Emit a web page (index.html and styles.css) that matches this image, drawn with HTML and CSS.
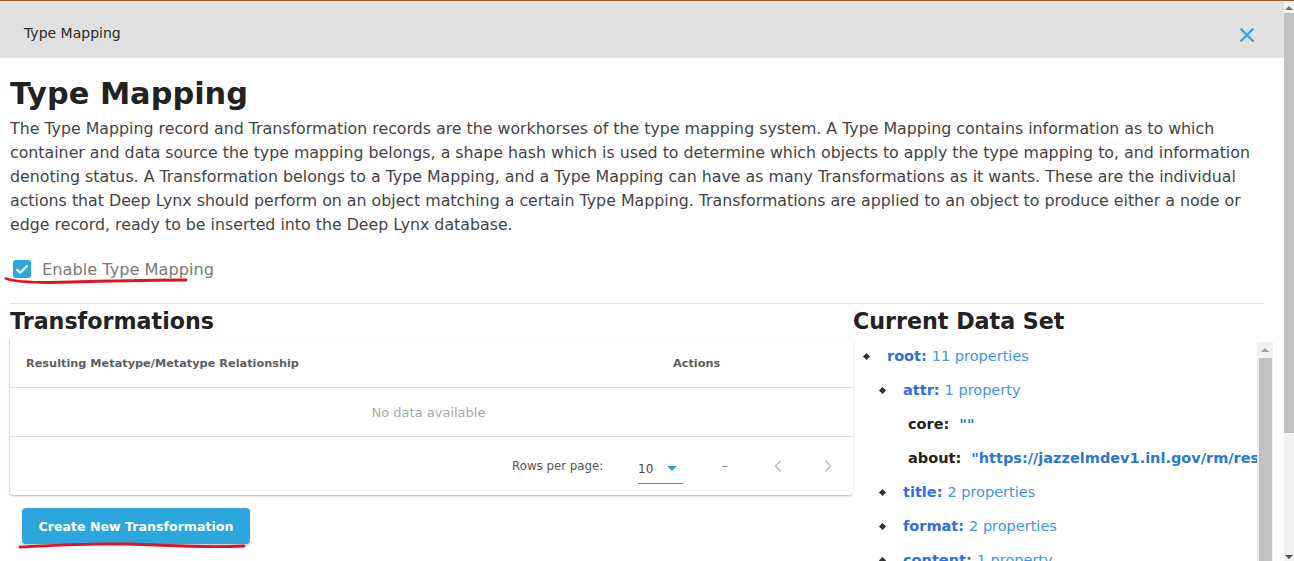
FILE: index.html
```html
<!DOCTYPE html>
<html>
<head>
<meta charset="utf-8">
<link rel="stylesheet" href="styles.css">
</head>
<body>
<div class="topline"></div>
<div class="frame">
  <div class="dialog">
    <div class="dlg-header">
      <span class="dlg-title">Type Mapping</span>
      <svg class="close" width="16" height="16" viewBox="0 0 16 16"><path d="M1.5 1.5 L14.5 14.5 M14.5 1.5 L1.5 14.5" stroke="#2ba6df" stroke-width="2.2" fill="none"/></svg>
    </div>
    <div class="content">
      <h1 class="title">Type Mapping</h1>
      <p class="desc">The Type Mapping record and Transformation records are the workhorses of the type mapping system. A Type Mapping contains information as to which container and data source the type mapping belongs, a shape hash which is used to determine which objects to apply the type mapping to, and information denoting status. A Transformation belongs to a Type Mapping, and a Type Mapping can have as many Transformations as it wants. These are the individual actions that Deep Lynx should perform on an object matching a certain Type Mapping. Transformations are applied to an object to produce either a node or edge record, ready to be inserted into the Deep Lynx database.</p>
      <div class="enable">
        <span class="checkbox"><svg width="18" height="18" viewBox="0 0 18 18"><path d="M3.5 9.2 L7.2 12.8 L14.5 5.5" stroke="#fff" stroke-width="2.2" fill="none"/></svg></span>
        <span class="enable-label">Enable Type Mapping</span>
        <svg class="scribble scribble1" width="190" height="10" viewBox="0 0 190 10"><path d="M2 2.5 C 10 5.5, 25 6.5, 45 6.5 C 90 5.5, 140 4, 182 4" stroke="#e0141e" stroke-width="2.8" fill="none" stroke-linecap="round"/></svg>
      </div>
      <div class="split">
        <div class="left">
          <h2 class="sec-title">Transformations</h2>
          <div class="card">
            <div class="thead">
              <span class="th th-main">Resulting Metatype/Metatype Relationship</span>
              <span class="th th-actions">Actions</span>
            </div>
            <div class="empty">No data available</div>
            <div class="tfoot">
              <span class="rpp">Rows per page:</span>
              <span class="select"><span class="sel-val">10</span><svg width="10" height="6" viewBox="0 0 10 6"><path d="M0 0 L10 0 L5 5 Z" fill="#2ba6df"/></svg></span>
              <span class="dash">–</span>
              <svg class="chev" width="10" height="14" viewBox="0 0 10 14"><path d="M7.5 1.5 L2.5 7 L7.5 12.5" stroke="#c4c4c4" stroke-width="1.6" fill="none"/></svg>
              <svg class="chev chev2" width="10" height="14" viewBox="0 0 10 14"><path d="M2.5 1.5 L7.5 7 L2.5 12.5" stroke="#c4c4c4" stroke-width="1.6" fill="none"/></svg>
            </div>
          </div>
          <div class="btn-wrap">
            <button class="btn">Create New Transformation</button>
            <svg class="scribble scribble2" width="232" height="10" viewBox="0 0 232 10"><path d="M2 6 C 40 4, 70 2, 110 3 C 150 4, 180 7, 226 5" stroke="#e0141e" stroke-width="2.8" fill="none" stroke-linecap="round"/></svg>
          </div>
        </div>
        <div class="right">
          <h2 class="sec-title">Current Data Set</h2>
          <div class="tree-box">
            <div class="tree">
              <div class="node l0"><span class="dot"></span><span class="key">root:</span><span class="cnt">11 properties</span></div>
              <div class="node l1"><span class="dot"></span><span class="key">attr:</span><span class="cnt">1 property</span></div>
              <div class="leaf"><span class="lkey">core:</span><span class="val">""</span></div>
              <div class="leaf"><span class="lkey">about:</span><span class="val">"https://jazzelmdev1.inl.gov/rm/resources/TX_abc123"</span></div>
              <div class="node l1"><span class="dot"></span><span class="key">title:</span><span class="cnt">2 properties</span></div>
              <div class="node l1"><span class="dot"></span><span class="key">format:</span><span class="cnt">2 properties</span></div>
              <div class="node l1"><span class="dot"></span><span class="key">content:</span><span class="cnt">1 property</span></div>
            </div>
            <div class="vscroll inner">
              <span class="arr up"></span>
              <span class="thumb"></span>
            </div>
          </div>
        </div>
      </div>
    </div>
  </div>
  <div class="vscroll page">
    <span class="arr up"></span>
    <span class="thumb"></span>
    <span class="arr down"></span>
  </div>
</div>
</body>
</html>
```

FILE: styles.css
```css
* { box-sizing: border-box; }
html, body { margin: 0; padding: 0; }
body {
  width: 1294px;
  height: 561px;
  overflow: hidden;
  background: #fff;
  font-family: "DejaVu Sans", "Noto Sans", sans-serif;
  color: #222;
}
.topline {
  height: 1px;
  background: #9c5a1e;
}
.frame {
  display: flex;
  height: 560px;
}
.dialog {
  width: 1284px;
  height: 560px;
  overflow: hidden;
  background: #fff;
}
.dlg-header {
  height: 57px;
  background: #e0e0e0;
  display: flex;
  align-items: center;
  justify-content: space-between;
  padding: 0 29px 0 24px;
}
.dlg-title {
  font-size: 14px;
  color: #2b2b2b;
  margin-top: 7px;
}
.close { margin-top: 10px; }
.content {
  padding: 16px 0 0 10px;
  width: 1264px;
}
.title {
  margin: 0;
  font-size: 30.4px;
  font-weight: bold;
  line-height: 40px;
  color: #222;
}
.desc {
  margin: 3px 0 0 0;
  font-size: 15.8px;
  line-height: 24px;
  color: #444;
}
.enable {
  position: relative;
  display: flex;
  align-items: center;
  margin-top: 20px;
  height: 24px;
}
.checkbox {
  width: 18px;
  height: 18px;
  margin-left: 3px;
  background: #2ba6df;
  border-radius: 3px;
  display: flex;
}
.enable-label {
  margin-left: 11px;
  font-size: 16.2px;
  color: #7a7a7a;
}
.scribble { position: absolute; }
.scribble1 { left: -6px; top: 19px; }
.split {
  display: flex;
  margin-top: 22px;
  border-top: 1px solid #e2e2e2;
  width: 1254px;
}
.left { width: 843px; }
.right { width: 411px; position: relative; }
.sec-title {
  margin: 0;
  font-size: 22.2px;
  font-weight: bold;
  line-height: 35px;
  color: #222;
}
.card {
  background: #fff;
  border-radius: 0 0 4px 4px;
  box-shadow: 0 2px 2px -1px rgba(0,0,0,0.2), 0 1px 3px 0 rgba(0,0,0,0.12), -1px 0 0 0 #e6e6e6;
}
.thead {
  display: flex;
  align-items: center;
  height: 49px;
  border-bottom: 1px solid #e0e0e0;
  padding-left: 16px;
  padding-top: 1px;
}
.th {
  font-size: 11.3px;
  font-weight: bold;
  color: #5e5e5e;
}
.th-main { width: 647px; }
.empty {
  height: 49px;
  border-bottom: 1px solid #e0e0e0;
  display: flex;
  align-items: center;
  justify-content: center;
  font-size: 13px;
  color: #a8a8a8;
  padding-right: 6px;
}
.tfoot {
  height: 58px;
  display: flex;
  align-items: center;
  padding-left: 502px;
  font-size: 11.8px;
  color: #555;
}
.tfoot > * { flex-shrink: 0; }
.rpp { width: 126px; }
.select {
  width: 45px;
  height: 30px;
  border-bottom: 1px solid #2ba6df;
  display: flex;
  align-items: center;
  margin-top: 6px;
}
.sel-val { width: 29px; font-size: 12px; color: #444; }
.dash { margin-left: 39px; width: 51px; color: #888; }
.chev { margin-right: 40px; }
.chev2 { margin-right: 0; }
.btn-wrap {
  position: relative;
  margin-top: 13px;
  padding-left: 12px;
}
.btn {
  width: 228px;
  height: 36px;
  border: 0;
  border-radius: 4px;
  background: #2ba6df;
  color: #fff;
  font-family: "DejaVu Sans", sans-serif;
  font-size: 12.6px;
  font-weight: 600;
  box-shadow: 0 2px 2px rgba(0,0,0,0.18);
  padding: 0;
}
.scribble2 { left: 8px; top: 33px; }
.tree-box {
  display: flex;
  margin-top: 3px;
  width: 420px;
  height: 230px;
}
.tree {
  width: 404px;
  overflow: hidden;
  white-space: nowrap;
  font-size: 14.5px;
}
.node, .leaf {
  height: 34px;
  display: flex;
  align-items: center;
}
.tree .node.l0 { margin-top: -3px; }
.node.l0 { padding-left: 11px; }
.node.l1 { padding-left: 27px; }
.leaf { padding-left: 55px; }
.dot {
  width: 5px;
  height: 5px;
  background: #333;
  transform: rotate(45deg);
  margin-right: 18px;
}
.key { color: #2d6ee0; font-weight: 600; margin-right: 5px; }
.cnt { color: #3f93e8; }
.lkey { color: #222; font-weight: 600; margin-right: 10px; }
.val { color: #2a78d6; font-weight: 600; }
.vscroll {
  background: #f1f1f1;
  display: flex;
  flex-direction: column;
  align-items: center;
}
.vscroll.inner { width: 16px; }
.vscroll.page { width: 10px; height: 560px; }
.thumb {
  background: #c1c1c1;
  flex: 1;
  width: 100%;
}
.inner .thumb { width: 13px; }
.page .thumb { flex: none; height: 420px; width: 10px; }
.arr {
  width: 0; height: 0;
  border-left: 4px solid transparent;
  border-right: 4px solid transparent;
}
.arr.up { border-bottom: 4px solid #a3a3a3; margin: 6px 0 6px; }
.page .arr.up { border-bottom-color: #777; margin: 5px 0 3px; }
.arr.down { border-top: 4px solid #505050; margin-top: auto; margin-bottom: 2px; }
```
